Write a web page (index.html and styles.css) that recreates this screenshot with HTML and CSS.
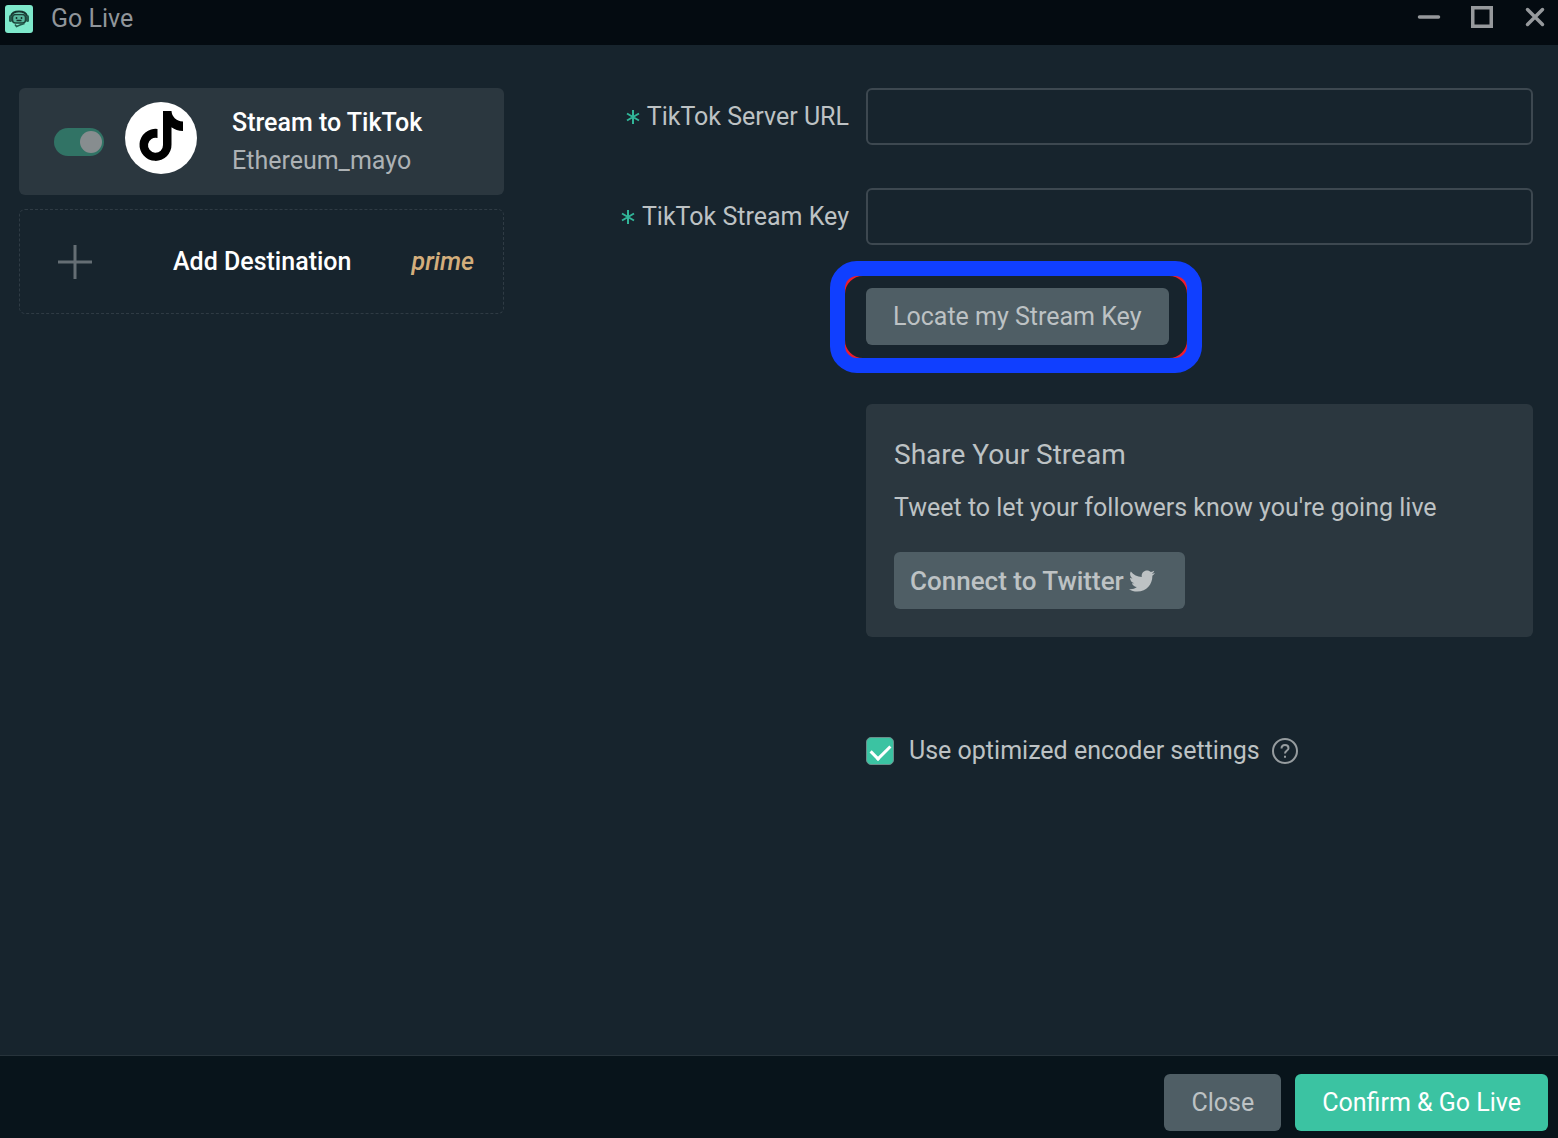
FILE: index.html
```html
<!DOCTYPE html>
<html lang="en">
<head>
<meta charset="utf-8">
<title>Go Live</title>
<meta name="viewport" content="width=device-width, initial-scale=1">
<link rel="stylesheet" href="styles.css">
</head>
<body>
<div class="window">
  <header class="titlebar">
    <svg class="app-icon" width="28" height="28" viewBox="0 0 28 28" aria-hidden="true">
      <rect width="28" height="28" rx="3" fill="#7ee8cb"/>
      <path d="M6 11C7 7.500 10 6.500 14 6.500S21 7.500 22 11" fill="none" stroke="#17352f" stroke-width="2"/>
      <rect x="4" y="10" width="3" height="7" rx="1.500" fill="#245a4c"/>
      <rect x="21" y="10" width="3" height="7" rx="1.500" fill="#245a4c"/>
      <rect x="7.500" y="9.500" width="13" height="8.500" rx="3" fill="#58b79d" stroke="#1c4239" stroke-width="1.500"/>
      <path d="M11.500 12v2M16.500 12v2M11.500 15.500h5" stroke="#17352f" stroke-width="1.500" fill="none"/>
      <path d="M10 19.500l1.500 2L15 20l4.500-1.500" stroke="#245a4c" stroke-width="1.500" fill="none"/>
    </svg>
    <h1 class="title">Go Live</h1>
    <div class="window-controls">
      <button class="window-button" type="button" aria-label="Minimize">
        <svg width="24" height="24" viewBox="0 0 24 24"><path d="M2.500 12h19" stroke-width="3.500" stroke-linecap="round"/></svg>
      </button>
      <button class="window-button" type="button" aria-label="Maximize">
        <svg width="24" height="24" viewBox="0 0 24 24"><rect x="2.750" y="2.750" width="18.500" height="18.500" stroke-width="3.500"/></svg>
      </button>
      <button class="window-button" type="button" aria-label="Close window">
        <svg width="24" height="24" viewBox="0 0 24 24"><path d="M4.500 4.500l15 15M19.500 4.500l-15 15" stroke-width="3.500" stroke-linecap="round"/></svg>
      </button>
    </div>
  </header>

  <main class="content">
    <section class="destinations" aria-label="Destinations">
      <label class="destination">
        <input class="toggle" type="checkbox" role="switch" checked>
        <svg class="tiktok" width="72" height="72" viewBox="0 0 72 72" aria-hidden="true">
          <circle cx="36" cy="36" r="36" fill="#fff"/>
          <path d="M38 9h8.500c.3 5.500 4.500 10 11.500 10.500V29c-4.500 0-8.500-1.500-11.500-3.800V42.500A16 16 0 1 1 32.500 27v9A7.500 7.500 0 1 0 38 43Z" fill="#000"/>
        </svg>
        <span class="destination-text">
          <strong class="destination-name">Stream to TikTok</strong>
          <span class="destination-user">Ethereum_mayo</span>
        </span>
      </label>
      <button class="add-destination" type="button">
        <svg class="plus" width="34" height="34" viewBox="0 0 34 34" aria-hidden="true"><path d="M17 0v34M0 17h34" stroke="#656e74" stroke-width="3"/></svg>
        <span class="add-label">Add Destination</span>
        <span class="prime">prime</span>
      </button>
    </section>

    <form class="settings">
      <div class="row">
        <label class="label" for="server-url"><svg class="required" width="14" height="14" viewBox="0 0 14 14" aria-hidden="true"><path d="M7 0v14M1 3.500l12 7M13 3.500l-12 7"/></svg>TikTok Server URL</label>
        <input class="textbox" id="server-url" type="text" required>
      </div>
      <div class="row">
        <label class="label" for="stream-key"><svg class="required" width="14" height="14" viewBox="0 0 14 14" aria-hidden="true"><path d="M7 0v14M1 3.500l12 7M13 3.500l-12 7"/></svg>TikTok Stream Key</label>
        <input class="textbox" id="stream-key" type="text" required>
      </div>
      <div class="row">
        <div class="locate field">
          <button class="button" type="button">Locate my Stream Key</button>
        </div>
      </div>
      <div class="row share-row">
        <section class="share field">
          <h2 class="share-title">Share Your Stream</h2>
          <p class="share-text">Tweet to let your followers know you're going live</p>
          <button class="button twitter-button" type="button">Connect to Twitter
            <svg width="26" height="26" viewBox="0 0 512 512" aria-hidden="true"><path fill="currentColor" d="M459.370 151.716c.325 4.548.325 9.097.325 13.645 0 138.720-105.583 298.558-298.558 298.558-59.452 0-114.680-17.219-161.137-47.106 8.447.974 16.568 1.299 25.340 1.299 49.055 0 94.213-16.568 130.274-44.832-46.132-.975-84.792-31.188-98.112-72.772 6.498.974 12.995 1.624 19.818 1.624 9.421 0 18.843-1.300 27.614-3.573-48.081-9.747-84.143-51.980-84.143-102.985v-1.299c13.969 7.797 30.214 12.670 47.431 13.319-28.264-18.843-46.781-51.005-46.781-87.391 0-19.492 5.197-37.360 14.294-52.954 51.655 63.675 129.300 105.258 216.365 109.807-1.624-7.797-2.599-15.918-2.599-24.040 0-57.828 46.782-104.934 104.934-104.934 30.213 0 57.502 12.670 76.670 33.137 23.715-4.548 46.456-13.320 66.599-25.340-7.798 24.366-24.366 44.833-46.132 57.827 21.117-2.273 41.584-8.122 60.426-16.243-14.292 20.791-32.161 39.308-52.628 54.253z"/></svg>
          </button>
        </section>
      </div>
      <div class="row encoder-row">
        <div class="encoder field">
          <input class="checkbox" id="encoder" type="checkbox" checked>
          <label class="encoder-label" for="encoder">Use optimized encoder settings</label>
          <svg class="help" width="26" height="26" viewBox="0 0 26 26" role="img" aria-label="Help">
            <circle cx="13" cy="13" r="12"/>
            <path d="M9.500 10.500C9.500 8 11 7 13 7s3.500 1.200 3.500 3.200C16.500 12.500 13 12.500 13 15.500M13 17.800v2"/>
          </svg>
        </div>
      </div>
    </form>
  </main>

  <footer class="footer">
    <button class="button" type="button">Close</button>
    <button class="button primary" type="button">Confirm &amp; Go Live</button>
  </footer>
</div>
</body>
</html>
```
FILE: styles.css
```css
* {
  box-sizing: border-box;
}

body {
  margin: 0;
  background: #17242d;
  color: #bdc2c4;
  font: 400 25px/38px Roboto, "Liberation Sans", sans-serif;
}

button {
  font: inherit;
  color: inherit;
  border: 0;
  cursor: pointer;
}

.window {
  min-height: 100vh;
  display: flex;
  flex-direction: column;
}

/* Title bar */
.titlebar {
  display: flex;
  align-items: center;
  height: 45px;
  padding: 0 11px 8px 5px;
  background: #040b11;
}

.app-icon {
  margin-top: 1px;
}

.title {
  margin: 0 0 0 18px;
  font-size: 25px;
  font-weight: 400;
  color: #90959a;
}

.window-controls {
  display: flex;
  gap: 29px;
  margin-left: auto;
  padding-bottom: 4px;
}

.window-button {
  display: flex;
  padding: 0;
  background: none;
}

.window-button svg {
  fill: none;
  stroke: #96999c;
}

/* Body */
.content {
  flex: 1;
  display: grid;
  grid-template-columns: 485px 1fr;
  align-items: start;
  padding: 43px 25px 43px 19px;
}

.destinations {
  display: grid;
  gap: 14px;
}

.destination {
  display: flex;
  align-items: center;
  height: 107px;
  padding: 0 35px;
  border-radius: 6px;
  background: #2b373f;
}

.toggle {
  appearance: none;
  display: flex;
  justify-content: flex-end;
  align-items: center;
  width: 50px;
  height: 28px;
  margin: 0;
  padding: 0 2px;
  border-radius: 14px;
  background: #317365;
}

.toggle::before {
  content: "";
  width: 22px;
  height: 22px;
  border-radius: 50%;
  background: #878d8f;
}

.toggle:not(:checked) {
  justify-content: flex-start;
}

.tiktok {
  margin: 0 35px 8px 21px;
}

.destination-text {
  display: grid;
}

.destination-name {
  font-weight: 500;
  color: #fff;
}

.destination-user {
  color: #adb2b5;
}

.add-destination {
  display: flex;
  align-items: center;
  height: 105px;
  padding: 0 29px 0 38px;
  border: 1px dashed #2f3b44;
  border-radius: 6px;
  background: none;
}

.add-label {
  margin-left: 81px;
  font-weight: 500;
  color: #fff;
}

.prime {
  margin-left: auto;
  font-style: italic;
  font-weight: 500;
  color: #d3ae7c;
}

/* Form */
.settings {
  display: grid;
  gap: 43px;
}

.row {
  display: grid;
  grid-template-columns: 345px 1fr;
  column-gap: 17px;
  align-items: center;
}

.label {
  display: flex;
  justify-content: flex-end;
  align-items: center;
  gap: 7px;
}

.required {
  fill: none;
  stroke: #31b598;
  stroke-width: 2;
}

.textbox {
  width: 100%;
  height: 57px;
  padding: 0 16px;
  border: 2px solid #3d4850;
  border-radius: 6px;
  background: transparent;
  color: inherit;
  font: inherit;
}

.field {
  grid-column: 2;
}

.button {
  height: 57px;
  padding: 0 27px;
  border-radius: 6px;
  background: #4f5e65;
}

.locate {
  position: relative;
  justify-self: start;
}

/* Highlight ring drawn over the form around the button */
.locate::before,
.locate::after {
  content: "";
  position: absolute;
  inset: -27px -33px -28px -36px;
  border: 15px solid #103fff;
  border-radius: 27px;
  pointer-events: none;
}

.locate::before {
  border-color: #ed1c2e;
  border-radius: 33px;
}

.share-row {
  margin-top: 16px;
}

.share {
  padding: 32px 28px 28px;
  border-radius: 6px;
  background: #2b373f;
}

.share-title {
  margin: 0;
  font-size: 28px;
  font-weight: 400;
}

.share-text {
  margin: 15px 0 25px;
}

.twitter-button {
  display: flex;
  align-items: center;
  gap: 5px;
  padding: 0 30px 0 16px;
  font-size: 26px;
  font-weight: 500;
}

.encoder-row {
  margin-top: 52px;
}

.encoder {
  display: flex;
  align-items: center;
}

.checkbox {
  appearance: none;
  display: grid;
  place-items: center;
  width: 28px;
  height: 28px;
  margin: 0 15px 0 0;
  border: 1px solid #6b8f8b;
  border-radius: 5px;
}

.checkbox:checked {
  background: #3bc3a2;
}

.checkbox:checked::before {
  content: "";
  width: 16px;
  height: 9px;
  margin-bottom: 3px;
  border: solid #fff;
  border-width: 0 0 3px 3px;
  transform: rotate(-45deg);
}

.help {
  margin-left: 12px;
  fill: none;
  stroke: #969c9f;
  stroke-width: 2;
}

/* Footer */
.footer {
  display: flex;
  justify-content: flex-end;
  gap: 14px;
  padding: 18px 10px 7px;
  border-top: 1px solid #27333b;
  background: #08141b;
}

.primary {
  background: #3bc3a2;
  color: #fff;
}
```
